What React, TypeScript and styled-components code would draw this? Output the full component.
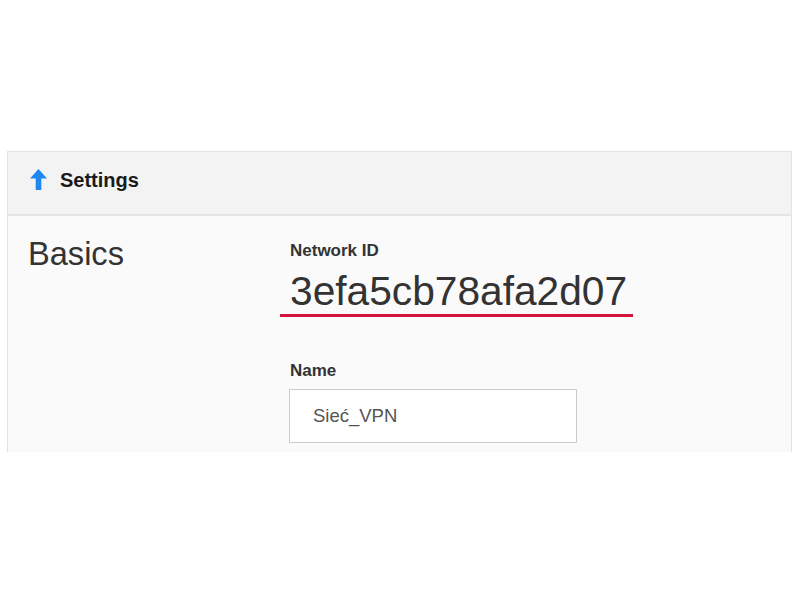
import React from "react";
import styled, { createGlobalStyle } from "styled-components";

const Global = createGlobalStyle`
  html, body { margin: 0; padding: 0; background: #ffffff; }
  body { font-family: "Liberation Sans", Arial, sans-serif; }
`;

const Page = styled.div`
  padding: 151px 8px 0 7px;
`;

const Panel = styled.section`
  border: 1px solid #e2e2e2;
  border-bottom: none;
  background: #fafafa;
`;

const Header = styled.header`
  box-sizing: border-box;
  height: 64px;
  display: flex;
  align-items: center;
  gap: 13px;
  padding: 0 0 8px 22px;
  background: #f3f3f3;
  border-bottom: 2px solid #e4e4e4;
`;

const Title = styled.h2`
  margin: 0;
  font-size: 20px;
  font-weight: 700;
  color: #1a1a1a;
  line-height: 1;
  padding-top: 2px;
`;

const Body = styled.div`
  display: grid;
  grid-template-columns: 262px 1fr;
  padding: 19px 0 6px 20px;
  height: 211px;
`;

const SectionTitle = styled.h3`
  margin: 0;
  font-size: 32.6px;
  font-weight: 400;
  color: #333;
  line-height: 1.15;
`;

const Fields = styled.div`
  display: flex;
  flex-direction: column;
  padding-top: 6px;
`;

const Label = styled.div`
  font-size: 17px;
  font-weight: 700;
  color: #333;
  line-height: 1.15;
`;

const IdValue = styled.div`
  align-self: flex-start;
  margin: 7px 0 44px -10px;
  padding: 0 6px 0 10px;
  font-size: 40.7px;
  line-height: 46px;
  color: #333;
  border-bottom: 3px solid #d2143a;
`;

const Input = styled.input`
  box-sizing: border-box;
  margin: 9px 0 0 -1px;
  width: 288px;
  height: 54px;
  padding: 0 0 0 23px;
  border: 1px solid #cccccc;
  background: #ffffff;
  font-family: "Liberation Sans", Arial, sans-serif;
  font-size: 18.5px;
  color: #555;
  outline: none;
`;

const Arrow = () => (
  <svg width="17" height="21" viewBox="0 0 17 21" aria-hidden>
    <path d="M8.5 0 L17 9.5 L11.3 9.5 L11.3 21 L5.7 21 L5.7 9.5 L0 9.5 Z" fill="#1f87f0" />
  </svg>
);

export default function App() {
  return (
    <>
      <Global />
      <Page>
        <Panel>
          <Header>
            <Arrow />
            <Title>Settings</Title>
          </Header>
          <Body>
            <SectionTitle>Basics</SectionTitle>
            <Fields>
              <Label>Network ID</Label>
              <IdValue>3efa5cb78afa2d07</IdValue>
              <Label>Name</Label>
              <Input defaultValue="Sieć_VPN" />
            </Fields>
          </Body>
        </Panel>
      </Page>
    </>
  );
}
